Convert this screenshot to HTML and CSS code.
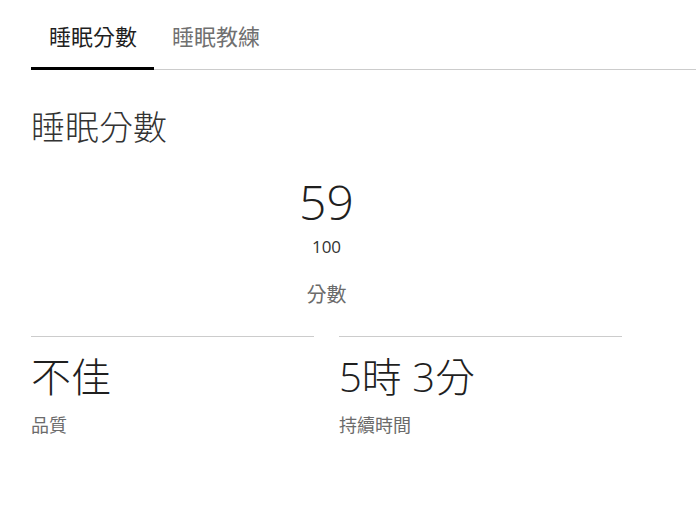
FILE: index.html
```html
<!DOCTYPE html>
<html lang="zh-Hant">
<head>
  <meta charset="UTF-8">
  <meta name="viewport" content="width=device-width, initial-scale=1.0">
  <title>睡眠分數</title>
  <link rel="stylesheet" href="styles.css">
</head>
<body>
  <nav class="tabs">
    <div class="tab active">睡眠分數</div>
    <div class="tab">睡眠教練</div>
  </nav>

  <main class="content">
    <h1 class="title">睡眠分數</h1>

    <div class="score">
      <div class="score-value">59</div>
      <div class="score-max">100</div>
      <div class="score-label">分數</div>
    </div>

    <div class="metrics">
      <div class="metric">
        <div class="metric-value">不佳</div>
        <div class="metric-label">品質</div>
      </div>
      <div class="metric">
        <div class="metric-value">5時 3分</div>
        <div class="metric-label">持續時間</div>
      </div>
    </div>
  </main>
</body>
</html>
```

FILE: styles.css
```css
:root {
  --text: #1f1f1f;
  --muted: #6b6b6b;
  --line: #cccccc;
}
* {
  box-sizing: border-box;
  margin: 0;
  padding: 0;
}
body {
  font-family: 'Open Sans', 'Noto Sans CJK TC', sans-serif;
  background: #ffffff;
  color: var(--text);
}
.tabs {
  display: flex;
  margin-left: 31px;
  padding-top: 20px;
  border-bottom: 1px solid var(--line);
}
.tab {
  font-size: 22px;
  line-height: 32px;
  padding: 0 17px 15px 18px;
  color: #707070;
  margin-bottom: -1px;
  border-bottom: 3px solid transparent;
}
.tab.active {
  color: var(--text);
  border-bottom-color: #000000;
}
.content {
  width: 591px;
  margin-left: 31px;
}
.title {
  font-size: 34px;
  font-weight: 300;
  line-height: 44px;
  color: #333333;
  margin-top: 35px;
}
.score {
  display: flex;
  flex-direction: column;
  align-items: center;
  margin-top: 20px;
}
.score-value {
  font-size: 48px;
  font-weight: 300;
  line-height: 65px;
}
.score-max {
  font-size: 17px;
  line-height: 23px;
  color: #333333;
  margin-top: 1px;
}
.score-label {
  font-size: 20px;
  line-height: 28px;
  color: var(--muted);
  margin-top: 23px;
}
.metrics {
  display: grid;
  grid-template-columns: 1fr 1fr;
  column-gap: 25px;
  margin-top: 27px;
}
.metric {
  border-top: 1px solid var(--line);
}
.metric-value {
  font-size: 40px;
  font-weight: 300;
  line-height: 56px;
  margin-top: 12px;
}
.metric-label {
  font-size: 18px;
  line-height: 25px;
  color: var(--muted);
  margin-top: 8px;
}
```
